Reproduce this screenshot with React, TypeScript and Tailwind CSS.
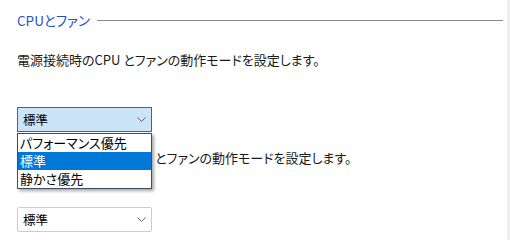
import React from "react";

const font = { fontFamily: '"Noto Sans CJK JP", "Noto Sans", sans-serif' };

function Chevron({ color = "#606060" }: { color?: string }) {
  return (
    <svg width="9" height="5" viewBox="0 0 9 5" className="shrink-0">
      <path d="M0.5 0.5 L4.5 4.5 L8.5 0.5" fill="none" stroke={color} strokeWidth="1" />
    </svg>
  );
}

export default function App() {
  return (
    <div
      className="relative w-[510px] h-[240px] bg-white overflow-hidden text-[13.5px] text-[#1a1a1a] [font-feature-settings:'palt']"
      style={font}
    >
      <div className="flex h-full">
        <div className="flex-1 flex flex-col pl-[17px] pr-[4px]">
          <div className="flex items-center gap-[7px] mt-[11px] h-[18px] leading-[18px]">
            <span className="text-[#1f52c8]">CPUとファン</span>
            <div className="flex-1 h-px bg-[#8a8a8a]" />
          </div>
          <div className="mt-[22px] h-[18px] leading-[18px] whitespace-nowrap text-[13px]">
            電源接続時のCPU とファンの動作モードを設定します。
          </div>

          <div className="relative mt-[38px] w-[135px] text-[12.5px]">
            <div className="h-[25px] flex items-center justify-between pl-[5px] pr-[5px] bg-[#cce4f7] border border-[#0078d7]">
              <span className="leading-[18px] text-black">標準</span>
              <Chevron />
            </div>
            <div className="absolute left-0 top-[26px] w-[135px] bg-white border border-[#3e4d66] shadow-[2px_2px_3px_rgba(0,0,0,0.35)] z-10 flex flex-col leading-[18px] text-black text-[13px]">
              <div className="h-[18px] pl-[2px] whitespace-nowrap">パフォーマンス優先</div>
              <div className="h-[18px] pl-[2px] bg-[#0078d7] text-white">標準</div>
              <div className="h-[18px] pl-[2px]">静かさ優先</div>
            </div>
          </div>

          <div className="mt-[17px] h-[18px] leading-[18px] whitespace-nowrap text-[13px]">
            バッテリー駆動時のCPU とファンの動作モードを設定します。
          </div>

          <div className="mt-[40px] w-[135px] h-[25px] flex items-center justify-between pl-[5px] pr-[5px] bg-white border border-[#cccccc] rounded-[2px] text-[12.5px]">
            <span className="leading-[18px] text-black">標準</span>
            <Chevron color="#707070" />
          </div>
        </div>
        <div className="w-[3px] h-full bg-[#f0f0f0]" />
      </div>
    </div>
  );
}
